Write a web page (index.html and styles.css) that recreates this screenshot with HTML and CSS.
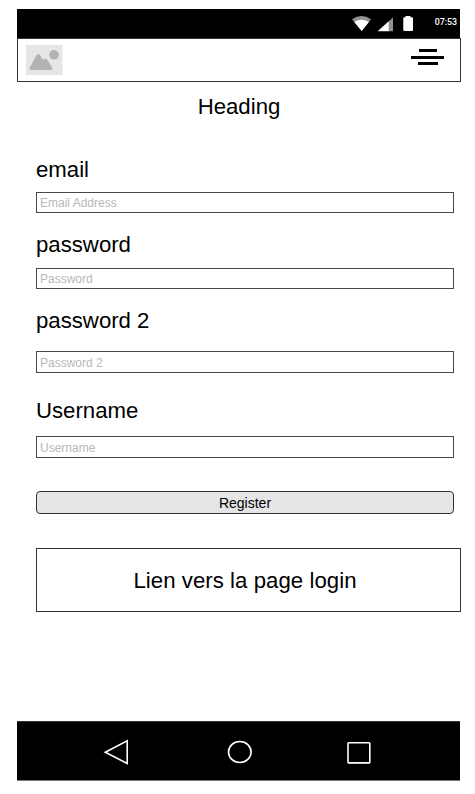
FILE: index.html
```html
<!DOCTYPE html>
<html lang="fr">
<head>
<meta charset="utf-8">
<title>Register</title>
<link rel="stylesheet" href="styles.css">
</head>
<body>
<div class="screen">
  <div class="status">
    <svg class="status-icons" width="64" height="18" viewBox="351 14 64 18">
      <path fill="#929292" d="M352 19.2Q361.500 12.600 371 19.200L361.700 31Z"/>
      <path fill="#fff" d="M354.300 22Q361.500 17.400 368.900 22L361.700 31Z"/>
      <path fill="#929292" d="M393 17.300V31.300H388V22.200Z"/>
      <path fill="#fff" d="M377.600 31.300L388.700 21.300V31.300Z"/>
      <path fill="#fff" d="M405.500 16H410.500V17.300H412Q413 17.300 413 18.300V30Q413 31 412 31H404.300Q403.300 31 403.300 30V18.300Q403.300 17.300 404.300 17.300H405.500Z"/>
    </svg>
    <span class="time">07:53</span>
  </div>
  <header class="header">
    <svg width="37" height="30" viewBox="0 0 37 30">
      <path fill="#e6e6e6" d="M0 0H36.500V30H0Z"/>
      <circle cx="28" cy="9.800" r="4.800" fill="#b2b2b2"/>
      <path fill="#b2b2b2" d="M4 22.200L10.400 10.500Q12.400 7.500 14.400 10.500L17 15Q19.600 11.800 21.600 15.200L26 22.300Q27.200 25 24.500 25H6Q3 25 4 22.200Z"/>
    </svg>
    <svg width="33" height="17" viewBox="0 0 33 17">
      <path d="M8 0H26V3H8ZM0 7H33V10H0ZM7 13H27V16H7Z"/>
    </svg>
  </header>
  <h1 class="heading">Heading</h1>
  <form class="form">
    <label class="label" for="email">email</label>
    <input class="field field-email" id="email" placeholder="Email Address">
    <label class="label" for="password">password</label>
    <input class="field field-password" id="password" placeholder="Password">
    <label class="label" for="password2">password 2</label>
    <input class="field field-confirm" id="password2" placeholder="Password 2">
    <label class="label" for="username">Username</label>
    <input class="field field-username" id="username" placeholder="Username">
    <button class="register" type="button">Register</button>
  </form>
  <a class="login">Lien vers la page login</a>
  <nav class="nav">
    <svg width="443" height="60" viewBox="17 721 443 60" fill="none" stroke="#fff" stroke-width="1.600">
      <path d="M105.300 752.300L127.200 740.800V763.500Z"/>
      <ellipse cx="239.800" cy="752" rx="11.300" ry="10.500"/>
      <rect x="348" y="742.700" width="21.800" height="20.200" rx=".7"/>
    </svg>
  </nav>
</div>
</body>
</html>
```
FILE: styles.css
```css
* {
  box-sizing: border-box;
}

body {
  margin: 0;
  background: #fff;
  color: #000;
  font-family: "Liberation Sans", Arial, sans-serif;
}

.screen {
  display: flex;
  flex-direction: column;
  width: 444px;
  height: 772px;
  margin: 9px 0 0 17px;
}

.status {
  display: flex;
  align-items: flex-start;
  justify-content: space-between;
  width: 443px;
  height: 29px;
  padding: 5px 3px 0 334px;
  background: #000;
}

.time {
  padding-top: 2px;
  color: #fff;
  font: 500 8.8px/12px Roboto, sans-serif;
}

.header {
  display: flex;
  justify-content: space-between;
  height: 44px;
  padding: 6px 16px 0 8px;
  border: 1px solid #333;
}

.header svg:last-child {
  margin-top: 4px;
}

.heading {
  margin: 12px 0 0;
  font-size: 22.2px;
  font-weight: 400;
  line-height: 26px;
  text-align: center;
}

.form {
  display: flex;
  flex-direction: column;
  width: 418px;
  margin: 37px 0 0 19px;
}

.label {
  font-size: 22.2px;
  line-height: 26px;
}

.field {
  height: 21px;
  padding: 1px 3px 0;
  border: 1px solid #4a4a4a;
  border-radius: 0;
  background: #fff;
  font: 12px "Liberation Sans", Arial, sans-serif;
}

.field::placeholder {
  color: #b8b8b8;
  opacity: 1;
}

.field-email {
  margin: 9px 0 19px;
}

.field-password {
  margin: 10px 0 19px;
}

.field-confirm {
  height: 22px;
  margin: 17px 0 25px;
}

.field-username {
  height: 22px;
  margin: 12px 0 33px;
}

.register {
  height: 23px;
  padding: 0;
  border: 1px solid #333;
  border-radius: 4px;
  background: #e5e5e5;
  color: #000;
  font: 14px "Liberation Sans", Arial, sans-serif;
}

.login {
  height: 64px;
  margin: 34px 0 0 19px;
  padding-right: 7px;
  border: 1px solid #333;
  font-size: 22.2px;
  letter-spacing: 0.05px;
  line-height: 63px;
  text-align: center;
}

.nav {
  width: 443px;
  height: 60px;
  margin-top: auto;
  border-top: 1px solid #333;
  border-bottom: 1px solid #777;
  background: #000;
}

.nav svg {
  display: block;
  margin-top: -1px;
}
```
